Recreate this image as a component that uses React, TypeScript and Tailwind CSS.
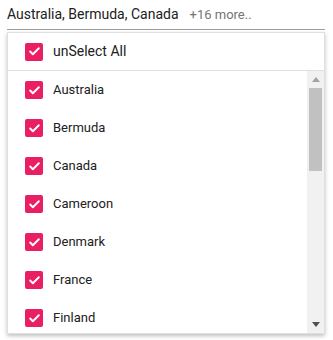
import { Check } from "lucide-react";

const countries = [
  "Australia",
  "Bermuda",
  "Canada",
  "Cameroon",
  "Denmark",
  "France",
  "Finland",
];

function Box() {
  return (
    <span className="flex h-[18px] w-[18px] shrink-0 items-center justify-center rounded-[2px] bg-[#e91e63]">
      <Check className="h-[13px] w-[13px] text-white" strokeWidth={3.5} />
    </span>
  );
}

function Arrow({ down, color }: { down?: boolean; color: string }) {
  return (
    <svg width="8" height="5" viewBox="0 0 8 5">
      <path d={down ? "M0 0H8L4 5Z" : "M0 5H8L4 0Z"} fill={color} />
    </svg>
  );
}

export default function App() {
  return (
    <div className="min-h-[340px] bg-white px-[7px] pr-[8px] font-['Roboto',sans-serif]">
      {/* Input */}
      <div className="flex h-[30px] items-center border-b border-[#9e9e9e] text-[14px] text-[#212121]">
        <span>Australia, Bermuda, Canada</span>
        <span className="ml-[11px] text-[13px] text-[#757575]">+16 more..</span>
      </div>

      {/* Popup */}
      <div className="mt-[2px] border border-[#e0e0e0] bg-white shadow-[0_2px_4px_rgba(0,0,0,0.25)]">
        <div className="flex h-[38px] items-center gap-[10px] border-b border-[#e0e0e0] pl-[17px] text-[14px] text-[#212121]">
          <Box />
          <span>unSelect All</span>
        </div>
        <div className="flex h-[262px]">
          <ul className="flex-1 overflow-hidden">
            {countries.map((c) => (
              <li
                key={c}
                className="flex h-[38px] items-center gap-[10px] pl-[17px] text-[13px] text-[#212121]"
              >
                <Box />
                <span>{c}</span>
              </li>
            ))}
          </ul>
          {/* Scrollbar */}
          <div className="flex w-[17px] flex-col bg-[#f1f1f1]">
            <div className="flex h-[17px] items-center justify-center">
              <Arrow color="#a3a3a3" />
            </div>
            <div className="mx-[2px] h-[83px] bg-[#c1c1c1]" />
            <div className="flex-1" />
            <div className="flex h-[17px] items-center justify-center">
              <Arrow down color="#505050" />
            </div>
          </div>
        </div>
      </div>
    </div>
  );
}
